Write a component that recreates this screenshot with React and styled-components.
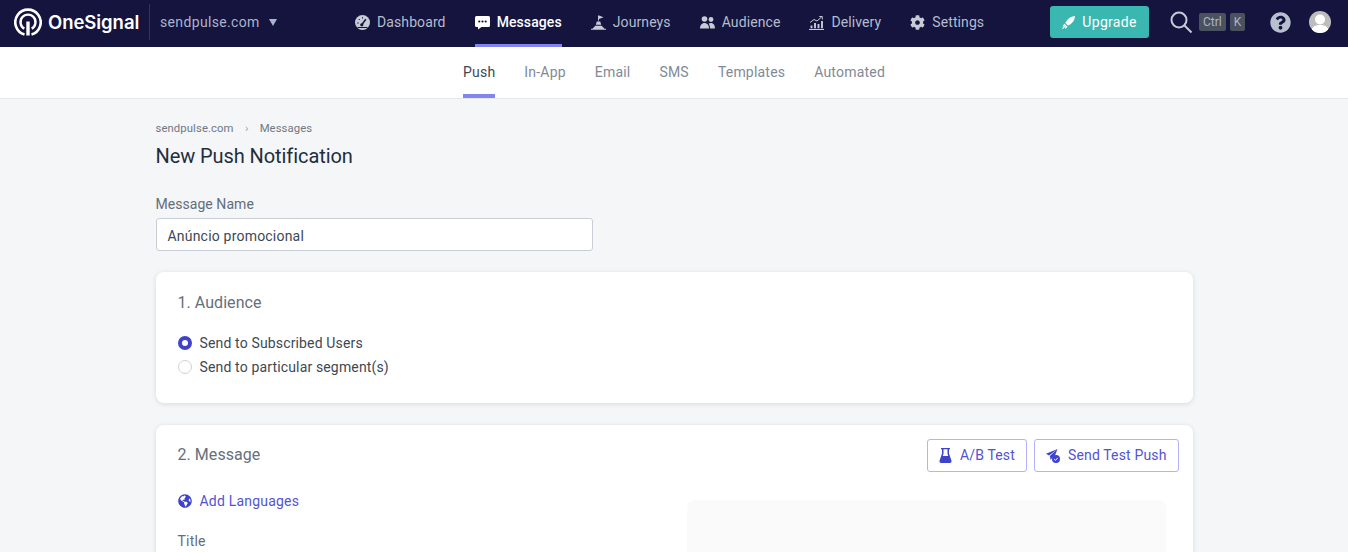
import styled, { createGlobalStyle } from "styled-components";
import { FaCog, FaQuestionCircle, FaGlobeAmericas } from "react-icons/fa";

const GlobalStyle = createGlobalStyle`
  html, body {
    margin: 0;
    height: 100%;
    overflow: hidden;
    background: #f5f6f8;
    font-family: Roboto, "Liberation Sans", sans-serif;
  }
  * { box-sizing: border-box; }
`;

const Page = styled.div`
  height: 552px;
  overflow: hidden;
`;

const TopBar = styled.header`
  height: 47px;
  background: #14143e;
  display: flex;
  align-items: center;
  padding: 0 0 3px 14px;
`;

const Logo = styled.div`
  width: 135px;
  display: flex;
  align-items: center;
  gap: 6px;
  color: #fff;
  font-family: Inter, sans-serif;
  font-size: 18.5px;
  font-weight: 600;
  letter-spacing: -0.05px;
`;

const AppPicker = styled.div`
  height: 36px;
  width: 206px;
  border-left: 1px solid #33335a;
  padding-left: 10px;
  display: flex;
  align-items: center;
  color: #a9b5cc;
  font-size: 14px;
  letter-spacing: 0.35px;
  &::after {
    content: "";
    margin-left: 9px;
    border-style: solid;
    border-width: 7px 4px 0;
    border-color: #a9b5cc transparent transparent;
  }
`;

const MainNav = styled.nav`
  height: 47px;
  width: 695px;
  margin-bottom: -3px;
  display: flex;
  gap: 29px;
`;

const NavItem = styled.a`
  height: 47px;
  display: flex;
  align-items: center;
  gap: 7px;
  color: ${(props) => (props.$active ? "#fff" : "#b4bccd")};
  font-size: 14px;
  font-weight: ${(props) => (props.$active ? 500 : 400)};
  letter-spacing: 0.1px;
  border-bottom: 3px solid ${(props) => (props.$active ? "#8484ee" : "transparent")};
  svg {
    flex: none;
    width: 15px;
    height: 15px;
    color: ${(props) => (props.$active ? "#fff" : "#c6cbd6")};
  }
`;

const UpgradeButton = styled.button`
  width: 99px;
  height: 32px;
  border: 0;
  border-radius: 3px;
  background: #3bb7b2;
  color: #fff;
  font: 400 14px Roboto, sans-serif;
  letter-spacing: 0.3px;
  display: flex;
  align-items: center;
  justify-content: center;
  gap: 7px;
`;

const SearchBox = styled.div`
  margin-left: 20px;
  display: flex;
  align-items: center;
  gap: 6px;
  color: #c5cad6;
`;

const Keys = styled.div`
  display: flex;
  gap: 4px;
`;

const Key = styled.span`
  height: 18px;
  padding: 0 4px;
  border-radius: 2px;
  background: #4a525f;
  color: #aeb6c2;
  font-size: 12px;
  line-height: 18px;
`;

const HelpIcon = styled(FaQuestionCircle)`
  margin-left: 25px;
  width: 21px;
  height: 21px;
  color: #b9bfce;
`;

const Avatar = styled.div`
  margin-left: 18px;
  width: 22px;
  height: 22px;
  border-radius: 50%;
  background: #bdbdbd;
  overflow: hidden;
`;

const SubNav = styled.nav`
  height: 52px;
  background: #fff;
  border-bottom: 1px solid #e5e7eb;
  display: flex;
  justify-content: center;
  gap: 29px;
`;

const SubTab = styled.a`
  height: 51px;
  display: flex;
  align-items: center;
  color: ${(props) => (props.$active ? "#3d4854" : "#818a96")};
  font-size: 14px;
  letter-spacing: 0.2px;
  border-bottom: 4px solid ${(props) => (props.$active ? "#8484ee" : "transparent")};
  padding-top: 2px;
`;

const Content = styled.main`
  width: 1037px;
  margin: 0 auto;
  padding-top: 23px;
`;

const Crumbs = styled.div`
  height: 14px;
  display: flex;
  align-items: center;
  color: #6f7884;
  font-size: 11.3px;
  line-height: 14px;
  letter-spacing: 0.1px;
`;

const CrumbSep = styled.span`
  width: 26px;
  text-align: center;
  color: #9aa2ad;
`;

const Heading = styled.h1`
  margin: 7px 0 0;
  color: #1f2d3d;
  font-size: 20px;
  line-height: 26px;
  font-weight: 400;
  letter-spacing: -0.08px;
`;

const FieldLabel = styled.label`
  display: block;
  margin-top: 26px;
  color: #636d79;
  font-size: 14px;
  line-height: 18px;
  letter-spacing: 0.05px;
`;

const NameInput = styled.div`
  width: 437px;
  height: 33px;
  margin-top: 5px;
  padding: 0 11px;
  border: 1px solid #c9ced6;
  border-radius: 3px;
  background: #fff;
  color: #3d4854;
  font-size: 14px;
  line-height: 35px;
  letter-spacing: 0.2px;
`;

const Card = styled.section`
  background: #fff;
  border-radius: 8px;
  box-shadow: 0 1px 5px rgba(40, 50, 70, 0.14);
  padding: 0 22px;
  margin-top: ${(props) => props.$top}px;
  height: ${(props) => props.$height}px;
`;

const CardHead = styled.div`
  height: 60px;
  display: flex;
  align-items: center;
  justify-content: space-between;
`;

const CardTitle = styled.h2`
  margin: 0 0 ${(props) => props.$lift || 0}px;
  color: #666f7b;
  font-size: 16px;
  font-weight: 400;
  letter-spacing: 0.05px;
`;

const RadioList = styled.div`
  margin-top: -1px;
`;

const RadioRow = styled.div`
  height: 24px;
  display: flex;
  align-items: center;
  gap: 7px;
  color: #3d4854;
  font-size: 14px;
  letter-spacing: 0.15px;
`;

const Radio = styled.span`
  width: 14px;
  height: 14px;
  margin-right: 1px;
  border-radius: 50%;
  background: #fff;
  border: ${(props) => (props.$on ? "4px solid #3f43c9" : "1px solid #cdd2da")};
`;

const Actions = styled.div`
  display: flex;
  gap: 7px;
  margin-right: -8px;
`;

const OutlineButton = styled.button`
  height: 33px;
  padding: 0 11px;
  border: 1px solid #b3b3f5;
  border-radius: 3px;
  background: #fff;
  color: #5254d0;
  font: 400 14px Roboto, sans-serif;
  letter-spacing: 0.15px;
  display: flex;
  align-items: center;
  gap: 8px;
  svg {
    color: #3f43c9;
  }
`;

const MessageBody = styled.div`
  display: grid;
  grid-template-columns: 509px 479px;
  padding-top: 6px;
`;

const LinkRow = styled.a`
  display: flex;
  align-items: center;
  gap: 8px;
  color: #5254d0;
  font-size: 14px;
  line-height: 20px;
  letter-spacing: 0.2px;
  svg {
    width: 14px;
    height: 14px;
    color: #3f43c9;
  }
`;

const TitleLabel = styled.div`
  margin-top: 20px;
  color: #636d79;
  font-size: 14px;
  line-height: 20px;
  letter-spacing: 0.2px;
`;

const Preview = styled.div`
  height: 200px;
  margin-top: 9px;
  border-radius: 8px;
  background: #fafafa;
`;

const LogoMark = () => (
  <svg width="28" height="28" viewBox="0 0 28 28" fill="none" stroke="#fff">
    <path d="M10.500 26.500A12.700 12.700 0 1 1 17.500 26.500" strokeWidth="2.600" />
    <path d="M10.300 20.600A7.500 7.500 0 1 1 17.700 20.600" strokeWidth="2.400" />
    <path d="M14 13.500V27.500" strokeWidth="3.400" />
  </svg>
);

const GaugeIcon = () => (
  <svg viewBox="0 0 15 15">
    <circle cx="7.500" cy="7.500" r="7.500" fill="currentColor" />
    <path d="M7 9.500 10.800 4.200" stroke="#14143e" strokeWidth="1.500" />
    <circle cx="6.800" cy="9.800" r="1.600" fill="#14143e" />
    <path d="M2.200 8h1.500M3.800 4l1 1M7.500 2.200v1.300M2.500 12.500h10" stroke="#14143e" strokeWidth="1" />
  </svg>
);

const BubbleIcon = () => (
  <svg viewBox="0 0 15 15">
    <path
      d="M1.500 1h12A1.500 1.500 0 0 1 15 2.500v8a1.500 1.500 0 0 1-1.500 1.500H6.500L3 14.500V12H1.500A1.500 1.500 0 0 1 0 10.500v-8A1.500 1.500 0 0 1 1.500 1z"
      fill="currentColor"
    />
    <circle cx="4.300" cy="6.500" r="1.100" fill="#14143e" />
    <circle cx="7.500" cy="6.500" r="1.100" fill="#14143e" />
    <circle cx="10.700" cy="6.500" r="1.100" fill="#14143e" />
  </svg>
);

const JourneyIcon = () => (
  <svg viewBox="0 0 15 15" fill="currentColor">
    <path d="M7 .5h1v5H7z" />
    <path d="M8 .5l4.500 1.700L8 4z" />
    <path d="M5.800 6.500h3.400l1 3.300H4.800zM4.300 10.800h6.400l2.800 3H15v1H0v-1h1.500z" />
  </svg>
);

const PeopleIcon = () => (
  <svg viewBox="0 0 15 15" fill="currentColor">
    <circle cx="4.500" cy="4" r="2.800" />
    <circle cx="11" cy="4.500" r="2.400" />
    <path d="M0 13.500c0-3.200 1.800-5.500 4.500-5.500S9 10.300 9 13.500z" />
    <path d="M10 13.500c0-2-.5-3.700-1.400-4.900.6-.5 1.500-.7 2.400-.7 2.400 0 4 2.200 4 5.600z" />
  </svg>
);

const DeliveryIcon = () => (
  <svg viewBox="0 0 15 15" fill="none" stroke="currentColor">
    <path d="M0 14.500h15" strokeWidth="1.100" />
    <path d="M1 7.500 5 4.500l3 1.500 4.500-4" strokeWidth="1" />
    <path d="M10.300 1.500h3v3" strokeWidth="1" />
    <path d="M2.500 13.300V10.500M6 13.300V8M9.500 13.300V9M13 13.300V6" strokeWidth="1.900" />
  </svg>
);

const RocketIcon = () => (
  <svg width="13" height="13" viewBox="0 0 13 13" fill="#fff">
    <path d="M13 0C8.800.3 5.300 2.800 3.400 7l2.600 2.600C10.200 7.700 12.700 4.200 13 0z" />
    <path d="M2.800 7.800.6 9.700l.8.700 2.200-1.900zM4.800 9.800 2.800 12l.8.800 2-2.200zM3.600 8.800 0 12.200l.8.800L4.500 9.700z" />
  </svg>
);

const SearchIcon = () => (
  <svg width="24" height="24" viewBox="0 0 24 24" fill="none" stroke="currentColor" strokeWidth="2">
    <circle cx="10" cy="10" r="7.500" />
    <path d="m15.500 15.500 7 7" />
  </svg>
);

const FlaskIcon = () => (
  <svg width="13" height="15" viewBox="0 0 13 15" fill="currentColor">
    <path d="M2 0h9v1.300h-1v4.200l2.500 7.300c.3 1.200-.4 2.200-1.600 2.200H2.100C.9 15 .2 14 .5 12.800L3 5.500V1.300H2zM4.500 1.300v4.500L3.800 8h5.400l-.7-2.200V1.300z" />
  </svg>
);

const TestPushIcon = () => (
  <svg width="14" height="15" viewBox="0 0 14 15" fill="currentColor">
    <path d="M11.500 1 0 5.800l3 1.700zM11.500 1 3.800 8l.9 4 1.500-2.300a4.500 4.500 0 0 1 2.900-2.500z" />
    <circle cx="10" cy="11" r="4" />
    <path d="m8.100 11 1.400 1.400 2.200-2.500" stroke="#fff" strokeWidth="1" fill="none" />
  </svg>
);

const UserGlyph = () => (
  <svg width="22" height="22" viewBox="0 0 22 22" fill="#fff">
    <circle cx="11" cy="8.500" r="5" />
    <path d="M2 22c0-5.500 3.500-8 9-8s9 2.500 9 8z" />
  </svg>
);

const App = () => (
  <Page>
    <GlobalStyle />
    <TopBar>
      <Logo>
        <LogoMark />
        OneSignal
      </Logo>
      <AppPicker>sendpulse.com</AppPicker>
      <MainNav>
        <NavItem><GaugeIcon />Dashboard</NavItem>
        <NavItem $active><BubbleIcon />Messages</NavItem>
        <NavItem><JourneyIcon />Journeys</NavItem>
        <NavItem><PeopleIcon />Audience</NavItem>
        <NavItem><DeliveryIcon />Delivery</NavItem>
        <NavItem><FaCog />Settings</NavItem>
      </MainNav>
      <UpgradeButton><RocketIcon />Upgrade</UpgradeButton>
      <SearchBox>
        <SearchIcon />
        <Keys>
          <Key>Ctrl</Key>
          <Key>K</Key>
        </Keys>
      </SearchBox>
      <HelpIcon />
      <Avatar><UserGlyph /></Avatar>
    </TopBar>
    <SubNav>
      <SubTab $active>Push</SubTab>
      <SubTab>In-App</SubTab>
      <SubTab>Email</SubTab>
      <SubTab>SMS</SubTab>
      <SubTab>Templates</SubTab>
      <SubTab>Automated</SubTab>
    </SubNav>
    <Content>
      <Crumbs>
        <span>sendpulse.com</span>
        <CrumbSep>›</CrumbSep>
        <span>Messages</span>
      </Crumbs>
      <Heading>New Push Notification</Heading>
      <FieldLabel>Message Name</FieldLabel>
      <NameInput>Anúncio promocional</NameInput>
      <Card $top={21} $height={131}>
        <CardHead><CardTitle>1. Audience</CardTitle></CardHead>
        <RadioList>
          <RadioRow><Radio $on />Send to Subscribed Users</RadioRow>
          <RadioRow><Radio />Send to particular segment(s)</RadioRow>
        </RadioList>
      </Card>
      <Card $top={22} $height={300}>
        <CardHead>
          <CardTitle $lift={2}>2. Message</CardTitle>
          <Actions>
            <OutlineButton><FlaskIcon />A/B Test</OutlineButton>
            <OutlineButton><TestPushIcon />Send Test Push</OutlineButton>
          </Actions>
        </CardHead>
        <MessageBody>
          <div>
            <LinkRow><FaGlobeAmericas />Add Languages</LinkRow>
            <TitleLabel>Title</TitleLabel>
          </div>
          <Preview />
        </MessageBody>
      </Card>
    </Content>
  </Page>
);

export default App;
